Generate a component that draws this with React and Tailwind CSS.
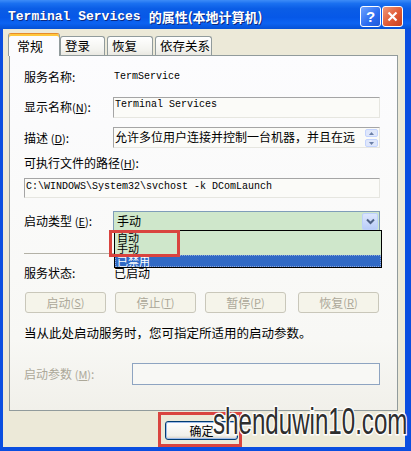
import React from "react";

const Key = ({ k }) => (
  <span className="text-[11px]">
    (<u>{k}</u>)
  </span>
);

const Field = ({ children, className = "" }) => (
  <div
    className={`flex items-start border border-t-[#a5a5a5] border-l-[#a5a5a5] border-r-[#e6e6e0] border-b-[#e6e6e0] bg-[#fbfbf8] ${className}`}
  >
    {children}
  </div>
);

const XpButton = ({ label, k, className = "" }) => (
  <div
    className={`flex h-[21px] w-[81px] items-center justify-center rounded-[3px] border border-[#c9c7ba] bg-[#f5f4ea] text-[12px] text-[#aca899] ${className}`}
  >
    {label}
    <Key k={k} />
  </div>
);

const tabs = [
  { title: "登录", w: "w-[45px]", ml: "ml-0" },
  { title: "恢复", w: "w-[46px]", ml: "ml-[2px]" },
  { title: "依存关系", w: "w-[57px]", ml: "ml-[2px]" },
];

const App = () => {
  return (
    <div className="relative flex h-[451px] w-[411px] flex-col overflow-hidden bg-[#0a4ee0] font-['Noto_Sans_CJK_SC',sans-serif] text-[12px] leading-none text-black">
      {/* Title bar */}
      <div className="flex h-[29px] shrink-0 items-start bg-[linear-gradient(to_bottom,#3d8cf7_0%,#1a70f0_12%,#0a5de6_30%,#0658e8_60%,#0c63f2_80%,#0551d6_100%)] pl-[8px] pr-[8px]">
        <div className="mt-[10px] flex items-center font-bold text-white [text-shadow:1px_1px_0_#0b2a82]">
          <span className="font-['Liberation_Mono',monospace] text-[13px]">
            Terminal Services
          </span>
          <span className="ml-[8px] text-[13px]">的属性(本地计算机)</span>
        </div>
        <div className="ml-auto mt-[6px] flex gap-px">
          <div className="flex h-[21px] w-[21px] items-center justify-center rounded-[3px] border border-white bg-[linear-gradient(135deg,#6ea3ff,#2a6bf0_60%,#1f58d8)] font-['Liberation_Sans',sans-serif] text-[15px] font-bold text-white">
            ?
          </div>
          <div className="flex h-[21px] w-[21px] items-center justify-center rounded-[3px] border border-white bg-[linear-gradient(135deg,#f0997a,#e05a34_55%,#c8401f)]">
            <svg width="11" height="11" viewBox="0 0 11 11">
              <path d="M1.5 1.5 L9.5 9.5 M9.5 1.5 L1.5 9.5" stroke="#fff" strokeWidth="2.2" />
            </svg>
          </div>
        </div>
      </div>

      {/* Dialog body */}
      <div className="mb-[4px] ml-[3px] mr-[6px] flex flex-1 flex-col bg-[#ece9d8]">
        {/* Tabs */}
        <div className="mt-[4px] flex h-[22px] items-end pl-[5px]">
          <div className="relative z-10 -mb-px flex h-[23px] w-[52px] items-center rounded-t-[3px] border border-b-0 border-[#919b9c] border-t-[#e68b2c] bg-[#fcfcfe] pl-[8px] text-[13px] shadow-[inset_0_2px_0_#ffc73c]">
            常规
          </div>
          {tabs.map((t) => (
            <div
              key={t.title}
              className={`flex h-[19px] items-center whitespace-nowrap rounded-t-[3px] border border-b-0 border-[#919b9c] bg-[linear-gradient(to_bottom,#ffffff,#f3f3ef_70%,#e9e8e1)] pl-[4px] text-[12.5px] ${t.w} ${t.ml}`}
            >
              {t.title}
            </div>
          ))}
        </div>

        {/* Tab panel */}
        <div className="ml-[6px] mr-[7px] flex h-[356px] flex-col border border-[#919b9c] bg-[linear-gradient(to_bottom,#fcfcfe,#f8f8f5_80%,#f1f0ea)] pl-[14px]">
          <div className="mt-[11px] flex h-[20px] items-center">
            <span className="w-[89px]">服务名称:</span>
            <span className="ml-px font-['Liberation_Mono',monospace] text-[10px]">TermService</span>
          </div>

          <div className="mt-[10px] flex h-[21px] items-start">
            <span className="mt-[4px] w-[89px]">
              显示名称<Key k="N" />:
            </span>
            <Field className="h-[21px] w-[267px]">
              <span className="mt-[2px] ml-px font-['Liberation_Mono',monospace] text-[10px]">
                Terminal Services
              </span>
            </Field>
          </div>

          <div className="mt-[9px] flex h-[21px] items-start">
            <span className="mt-[5px] w-[89px]">
              描述 <Key k="D" />:
            </span>
            <Field className="h-[21px] w-[267px]">
              <span className="mt-[3px] ml-px whitespace-nowrap">
                允许多位用户连接并控制一台机器，并且在远
              </span>
              <div className="ml-auto mr-px flex flex-col gap-[2px] pt-px">
                {["M2 5 L4.5 2 L7 5Z", "M2 2 L4.5 5 L7 2Z"].map((d) => (
                  <div
                    key={d}
                    className="flex h-[8px] w-[13px] items-center justify-center rounded-[2px] border border-[#c3d3fd] bg-[#dfe7fb]"
                  >
                    <svg width="9" height="7" viewBox="0 0 9 7">
                      <path d={d} fill="#6b7fa6" />
                    </svg>
                  </div>
                ))}
              </div>
            </Field>
          </div>

          <div className="mt-[7px] flex h-[16px] items-center">
            可执行文件的路径 <Key k="H" />:
          </div>

          <Field className="mt-[7px] h-[20px] w-[356px]">
            <span className="mt-[3px] ml-px font-['Liberation_Mono',monospace] text-[10px]">
              C:\WINDOWS\System32\svchost -k DComLaunch
            </span>
          </Field>

          <div className="mt-[13px] flex h-[20px] items-center">
            <span className="w-[89px]">
              启动类型 <Key k="E" />:
            </span>
            <div className="relative z-20 flex h-[20px] w-[267px] items-center border border-[#7f9db9] bg-[#cfe7cb]">
              <span className="ml-[3px]">手动</span>
              <div className="ml-auto mr-px flex h-[17px] w-[16px] items-center justify-center rounded-[2px] border border-[#bcd0fb] bg-[linear-gradient(to_bottom,#dce6fd,#b9cdf8)]">
                <svg width="9" height="7" viewBox="0 0 9 7">
                  <path d="M1 1.5 L4.5 5 L8 1.5" stroke="#4d6185" strokeWidth="2" fill="none" />
                </svg>
              </div>
              {/* Open dropdown list */}
              <div className="absolute left-0 top-full flex w-[268px] flex-col border border-black bg-[#cfe7cb] text-[11px]">
                <div className="h-[12px] pl-[2px] leading-[12px]">自动</div>
                <div className="h-[12px] pl-[2px] leading-[11px]">手动</div>
                <div className="h-[12px] border border-dotted border-[#8fa8d8] bg-[#316ac5] pl-px leading-[10px] text-white">
                  已禁用
                </div>
              </div>
              {/* Red highlight */}
              <div className="absolute left-[-5px] top-[18px] h-[27px] w-[71px] border-[3px] border-[#d9443f]" />
            </div>
          </div>

          <div className="mt-[22px] h-px w-[356px] bg-[#b3b1a6]" />

          <div className="mt-[11px] flex h-[16px] items-center">
            <span className="w-[90px]">服务状态:</span>
            <span>已启动</span>
          </div>

          <div className="mt-[11px] flex">
            <XpButton label="启动" k="S" className="ml-px" />
            <XpButton label="停止" k="T" className="ml-[9px]" />
            <XpButton label="暂停" k="P" className="ml-[9px]" />
            <XpButton label="恢复" k="R" className="ml-[12px]" />
          </div>

          <div className="mt-[12px] flex h-[16px] items-center text-[12.5px]">
            当从此处启动服务时，您可指定所适用的启动参数。
          </div>

          <div className="mt-[22px] flex h-[22px] items-center">
            <span className="w-[108px] text-[#aca899]">
              启动参数 <Key k="M" />:
            </span>
            <div className="h-[22px] w-[248px] border border-[#8ea4c1] bg-[#f8f8f5]" />
          </div>
        </div>

        {/* Footer buttons */}
        <div className="relative mt-[10px] flex h-[19px] pl-[162px]">
          <div className="flex h-[19px] w-[73px] items-center justify-center rounded-[3px] border border-[#003c74] bg-[linear-gradient(to_bottom,#ffffff,#f0f0ea_80%,#d6d0c5)] shadow-[inset_0_0_0_1px_#9fbce9]">
            确定
          </div>
          <div className="absolute left-[155px] top-[-9px] h-[35px] w-[84px] border-[3px] border-[#d9443f]" />
        </div>
      </div>

      {/* Site watermark */}
      <div className="pointer-events-none absolute left-[213px] top-[404px] origin-left scale-x-[0.67] whitespace-nowrap font-['Liberation_Sans',sans-serif] text-[36px] leading-none text-[#2e2e2e] [-webkit-text-stroke:3px_#fff] [paint-order:stroke_fill]">
        shenduwin10.com
      </div>
    </div>
  );
};

export default App;
